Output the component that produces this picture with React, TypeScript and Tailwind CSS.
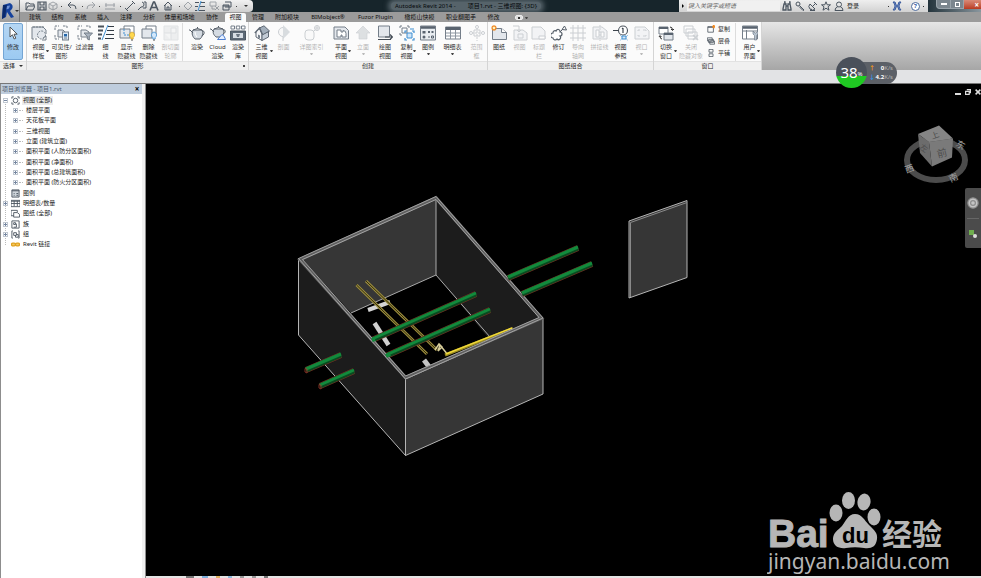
import React from "react";

type IconName = keyof typeof art;

const S = "#747e89";
const F = "#e3e7ec";
const B = "#3f8fd2";

const page = (
  <path d="M1 2h9l4 4v8H1z" fill={F} stroke={S} strokeWidth="1" />
);

const dashedCorners = (
  <path d="M1 5V1h4M9 1h4v3M1 10v4h4" fill="none" stroke={S} strokeWidth="1" strokeDasharray="2.5 1" />
);

const art = {
  arrow: <path d="M5 2v10l2.400-2.200L9.200 14l1.600-.8L9 9.200h3.200z" fill="#fff" stroke="#444" strokeWidth=".9" />,
  template: (
    <>
      <path d="M1 14V2h11l3 3v4" fill={F} stroke={S} />
      <path d="M1 14h6M2 2h11" stroke={S} strokeDasharray="2 1" />
      <circle cx="10.500" cy="10" r="4" fill={F} stroke={S} strokeDasharray="2 1" />
      <path d="M12 13l3-2v4h-4" fill="none" stroke={S} />
    </>
  ),
  visibility: (
    <>
      {dashedCorners}
      <path d="M4 5h5l3 3v4H4z" fill={F} stroke={S} />
      <rect x="8.500" y="7" width="6" height="8" fill="#dbe9f6" stroke={S} />
      <path d="M10 9h3v2.500h-3z" fill="#2566a8" />
      <path d="M10 13h3" stroke={S} />
    </>
  ),
  filter: (
    <>
      {dashedCorners}
      <path d="M4 5h5l3 2v5H4z" fill={F} stroke={S} />
      <path d="M7 8h8.500l-3.200 3.500V15l-2-1v-2.500z" fill="#a9b3bf" stroke={S} />
    </>
  ),
  thin: (
    <>
      <path d="M0 1.500h6M0 5.500h5M0 9.500h4M0 13.500h3" stroke="#4a525b" strokeWidth="1.800" />
      <path d="M10 1.500h6M9 5.500h7M8 9.500h8M7 13.500h9" stroke="#333b44" strokeWidth="1" />
      <path d="M10 0L4 15" stroke={B} strokeWidth="1" />
    </>
  ),
  showHidden: (
    <>
      <path d="M5 1h10v9H5z" fill="#fff" stroke={S} />
      <path d="M1 4h10v9H1z" fill={F} stroke={S} />
      <path d="M5 4v6h6" fill="none" stroke={B} strokeDasharray="2 1" />
      <path d="M13 7a3 3 0 0 1 1.200 5.500V14h-2.400v-1.500A3 3 0 0 1 13 7z" fill="#ffd84d" stroke="#c89a28" strokeWidth=".7" />
      <path d="M12 15h2" stroke="#555" />
    </>
  ),
  removeHidden: (
    <>
      <path d="M5 1h10v9H5z" fill="#fff" stroke={S} />
      <path d="M1 4h10v9H1z" fill={F} stroke={S} />
      <path d="M13 7a3 3 0 0 1 1.200 5.500V14h-2.400v-1.500A3 3 0 0 1 13 7z" fill="#d3e7fa" stroke={B} strokeWidth=".8" />
      <path d="M12 15h2" stroke="#555" />
    </>
  ),
  cut: (
    <>
      <path d="M1 1h14v14H1z" fill="#d4d7da" stroke="#b4b9be" />
      <path d="M1 8h7v7M8 3h5v5H8z" fill="#e8eaec" stroke="#a9afb5" />
    </>
  ),
  teapot: (
    <>
      <path d="M4 5c-2 4 0 7 2 9h5c2-2 4-5 2-9z" fill="#d5dbe2" stroke="#565f69" />
      <path d="M4 8L1 5H0M13 6c3-1 3 4-.5 5M4 5q4.500-3 9 0M8.500 3.500V2" fill="none" stroke="#565f69" />
      <path d="M6 7q0 3 2 5" stroke="#fff" fill="none" />
    </>
  ),
  cloudpot: (
    <>
      <path d="M4 4c-2 4 0 6 2 8h5c2-2 4-4 2-8z" fill="#d5dbe2" stroke="#565f69" />
      <path d="M4 7L1 4H0M13 5c3-1 3 3 0 4M4 4q4.500-3 9 0M8.500 2.500V1" fill="none" stroke="#565f69" />
      <path d="M7.500 14.500L12 9.500q2.500 1 3.500 5z" fill="#e4efff" stroke="#4f7fd0" />
    </>
  ),
  gallery: (
    <>
      <path d="M1 1h3.500v3H1zM6.300 1h3.500v3H6.300zM11.500 1H15v3h-3.500z" fill="#fff" stroke={S} />
      <path d="M.5 6h15v9H.5z" fill="#5d6976" stroke="#4c5762" />
      <path d="M3 8h10v5H3z" fill="#d7dde4" />
      <path d="M6 9h4l-1 3H7z" fill="#6c7783" />
    </>
  ),
  house: (
    <>
      <path d="M2 7v5l6 3.500V9L5.500 3.500z" fill="#f6f7f9" stroke="#5f6974" />
      <path d="M8 9.500v6l6.500-3.500V6.500z" fill="#c3ccd6" stroke="#5f6974" />
      <path d="M5.500 3L10 .8 15.500 6 8.500 9.800z" fill="#a3afbb" stroke="#5f6974" />
      <path d="M.8 8L5.500 3 8.500 9.500" fill="none" stroke="#5f6974" strokeWidth="1.300" />
      <path d="M4 9.500l2 1v3l-2-1z" fill={S} />
    </>
  ),
  section: (
    <>
      <circle cx="7" cy="7" r="4.500" fill="#f3f4f5" stroke={S} />
      <path d="M7 0l7 7-7 7z" fill="#9aa3ad" />
      <path d="M7 12v4" stroke={S} />
    </>
  ),
  callout: (
    <>
      <rect x="1" y="5" width="9" height="10" rx="3" fill="#f6f7f8" stroke={S} />
      <circle cx="13" cy="3" r="2.500" fill="none" stroke={S} />
      <path d="M10 6l1.500-1.500M10.500 3h5M13 .5v5" stroke={S} />
    </>
  ),
  plan: (
    <>
      <path d="M1 2h11l3.500 3.500V14H1z" fill={F} stroke={S} />
      <path d="M4 5h4v2h2V5.500q3 0 3 3V12H9v-2H8v2H4z" fill="#fff" stroke={S} />
    </>
  ),
  elevation: <path d="M8 1l7 7h-3v6H4V8H1z" fill="#a8afb6" stroke={S} strokeWidth=".6" />,
  drafting: (
    <>
      <path d="M1.500 1h11v11h-11z" fill={F} stroke={S} />
      <path d="M1 14.500h13M8 12h7M13 9.500l2.500 2.500-2.500 2.500" fill="none" stroke="#444c55" strokeWidth="1.200" />
    </>
  ),
  duplicate: (
    <>
      <path d="M3 3h5v5H3z" fill="#fff" stroke={S} />
      <path d="M1 3V1h2M8 1h2v2M1 8v2h2" fill="none" stroke={S} />
      <path d="M8 8h5v5H8z" fill="#cfe5f8" stroke={B} />
      <path d="M6 8V6h2M13 6h2v2M6 13v2h2M15 13v2h-2M11 4h4" fill="none" stroke={B} strokeWidth="1.200" />
    </>
  ),
  legend: (
    <>
      <path d="M.5 1h15v14H.5z" fill="#e9edf1" stroke={S} />
      <path d="M1 2.500h14" stroke="#59636f" strokeWidth="2.500" />
      <path d="M2.500 6h3v2.500h-3zM8 6h2v2H8zM11.500 6h2v2h-2z" fill="#59636f" />
      <circle cx="4" cy="12" r="1.500" fill="#59636f" />
      <path d="M8 12h2M11.500 11h2v2h-2z" stroke="#59636f" fill="none" />
    </>
  ),
  schedule: (
    <>
      <path d="M.5 2h15v12H.5z" fill="#fff" stroke={S} />
      <path d="M1 3.500h14" stroke="#59636f" strokeWidth="3" />
      <path d="M1 8h14M1 11h14M5.500 5v9M10.500 5v9" stroke="#8c959f" />
    </>
  ),
  scope: (
    <>
      <path d="M5 5h6v6H5z" fill="none" stroke={S} />
      <path d="M8 0v16M0 8h16" stroke={S} strokeDasharray="2 1" />
      <circle cx="8" cy="2" r="1.500" fill="#fff" stroke={S} />
      <circle cx="2" cy="8" r="1.500" fill="#fff" stroke={S} />
      <circle cx="14" cy="8" r="1.500" fill="#fff" stroke={S} />
    </>
  ),
  sheet: (
    <>
      <path d="M1.500 3.500h9l5 4v7h-14z" fill={F} stroke={S} />
      <path d="M10.500 3.500v4h5" fill="#fff" stroke={S} />
      <path d="M3 0v6M0 3h6M1 1l4 4M5 1L1 5" stroke="#f08a24" strokeWidth="1.200" />
      <circle cx="3" cy="3" r="1.200" fill="#fff3c0" />
    </>
  ),
  placeView: (
    <>
      <path d="M2 5h9l4 3v7H2z" fill={F} stroke={S} />
      <path d="M1 1h6v5M5 5l2 2 2-2M6 9h5v4H6z" fill="none" stroke={S} />
    </>
  ),
  titleBlock: (
    <>
      {page}
      <path d="M8 11h6v3H8z" fill="#fff" stroke={S} />
    </>
  ),
  revision: (
    <>
      <path d="M2 8a2 2 0 0 1 3-2 2 2 0 0 1 4 1 2 2 0 0 1 0 4 2 2 0 0 1-3 3 2.200 2.200 0 0 1-4-1 2.500 2.500 0 0 1 0-5z" fill="#fff" stroke="#565f69" strokeWidth="1.200" />
      <path d="M9 7l3-3M11 4.500L13.500 1l2 4z" fill="#fff" stroke="#565f69" />
    </>
  ),
  grid: <path d="M3 0v16M8 0v16M13 0v16M0 3h16M0 8h16M0 13h16" stroke={S} />,
  matchline: (
    <>
      <path d="M1 2h9l5 4v8H1z" fill={F} stroke={S} />
      <path d="M4 5h3v7H4zM9 7h3v5H9z" fill="#fff" stroke={S} />
      <path d="M8 0v16" stroke={S} strokeDasharray="2 1" />
    </>
  ),
  reference: (
    <>
      <circle cx="10" cy="5.500" r="4.500" fill="#fff" stroke="#4c545d" strokeWidth="1.100" />
      <path d="M0 5.500h5.500M10 3v5M9 3.800l1-.8" fill="none" stroke="#3c444d" strokeWidth="1.200" />
      <path d="M9 11h4v3H9zM7.500 10.500l1 .8M14.500 10.500l-1 .8M7.500 15l1-.8M14.500 15l-1-.8" fill="#d4e8f9" stroke={B} />
    </>
  ),
  viewport: (
    <>
      <path d="M1 2h10l4 4v8H1z" fill={F} stroke={S} />
      <path d="M4 6V5h2M9 5h3v1M4 10v1h2M9 11h3v-1" fill="none" stroke={S} />
    </>
  ),
  switchWin: (
    <>
      <path d="M1 2h9v7H1z" fill="#fff" stroke={S} />
      <path d="M1 3h9" stroke="#59636f" strokeWidth="2" />
      <path d="M6 8h9v7H6z" fill={F} stroke={S} />
      <path d="M6 9h9" stroke="#59636f" strokeWidth="2" />
      <path d="M12 2q2.500 0 2.500 3M13 4l1.500 1.500L16 4M4 14q-2 0-2-3M1 12l1-1.500L3.500 12" fill="none" stroke="#333" />
    </>
  ),
  closeHidden: (
    <>
      <path d="M1 1h9v7H1zM3 4h9v7H3zM5 7h9v7H5z" fill="#fff" stroke={S} />
      <path d="M10 10l5 5M15 10l-5 5" stroke={S} strokeWidth="1.600" />
    </>
  ),
  userUi: (
    <>
      <path d="M.5 1h15v13H.5z" fill="#fff" stroke={S} />
      <path d="M1 2.500h14" stroke="#59636f" strokeWidth="2.500" />
      <path d="M1 6h14M4.500 5v9" stroke={S} />
      <path d="M11 6v3l1.500 1.500V15h2v-4.500L16 9V6l-2 2h-1z" fill="#b8c4d0" stroke={S} strokeWidth=".7" />
    </>
  ),
};

const Icon = ({ name, className = "size-4" }: { name: IconName; className?: string }) => (
  <svg viewBox="0 0 16 16" className={`${className} shrink-0`} aria-hidden="true">
    {art[name]}
  </svg>
);

type Tool = {
  icon: IconName;
  lines: string[];
  w: string;
  off?: boolean;
  drop?: boolean;
};

const graphicsTools: Tool[] = [
  { icon: "template", lines: ["视图", "样板"], w: "w-[23px]", drop: true },
  { icon: "visibility", lines: ["可见性/", "图形"], w: "w-[23px]" },
  { icon: "filter", lines: ["过滤器"], w: "w-[23px]" },
  { icon: "thin", lines: ["细", "线"], w: "w-[19px]" },
  { icon: "showHidden", lines: ["显示", "隐藏线"], w: "w-[23px]" },
  { icon: "removeHidden", lines: ["删除", "隐藏线"], w: "w-[21px]" },
  { icon: "cut", lines: ["剖切面", "轮廓"], w: "w-[23px]", off: true },
];
const renderTools: Tool[] = [
  { icon: "teapot", lines: ["渲染"], w: "w-5" },
  { icon: "cloudpot", lines: ["Cloud", "渲染"], w: "w-[21px]" },
  { icon: "gallery", lines: ["渲染", "库"], w: "w-5" },
];
const createTools: Tool[] = [
  { icon: "house", lines: ["三维", "视图"], w: "w-[25px]", drop: true },
  { icon: "section", lines: ["剖面"], w: "w-[19px]", off: true },
  { icon: "callout", lines: ["详图索引"], w: "w-[37px]", off: true, drop: true },
  { icon: "plan", lines: ["平面", "视图"], w: "w-[22px]", drop: true },
  { icon: "elevation", lines: ["立面"], w: "w-[22px]", off: true, drop: true },
  { icon: "drafting", lines: ["绘图", "视图"], w: "w-[22px]" },
  { icon: "duplicate", lines: ["复制", "视图"], w: "w-[21px]", drop: true },
  { icon: "legend", lines: ["图例"], w: "w-[22px]", drop: true },
  { icon: "schedule", lines: ["明细表"], w: "w-[27px]", drop: true },
  { icon: "scope", lines: ["范围", "框"], w: "w-[21px]", off: true },
];
const sheetTools: Tool[] = [
  { icon: "sheet", lines: ["图纸"], w: "w-[22px]" },
  { icon: "placeView", lines: ["视图"], w: "w-[19px]", off: true },
  { icon: "titleBlock", lines: ["标题", "栏"], w: "w-5", off: true },
  { icon: "revision", lines: ["修订"], w: "w-[19px]" },
  { icon: "grid", lines: ["导向", "轴网"], w: "w-5", off: true },
  { icon: "matchline", lines: ["拼接线"], w: "w-[23px]", off: true },
  { icon: "reference", lines: ["视图", "参照"], w: "w-[19px]" },
  { icon: "viewport", lines: ["视口"], w: "w-[23px]", off: true, drop: true },
];
const windowTools: Tool[] = [
  { icon: "switchWin", lines: ["切换", "窗口"], w: "w-6", drop: true },
  { icon: "closeHidden", lines: ["关闭", "隐藏对象"], w: "w-[26px]", off: true },
];

const Caret = ({ className = "" }: { className?: string }) => (
  <span className={`h-0 w-0 border-x-2 border-t-2 border-x-transparent border-t-[#333] ${className}`} />
);

const MiniCaret = ({ className = "" }: { className?: string }) => (
  <span className={`h-0 w-[3px] border-x border-t-2 border-x-transparent border-t-[#444] ${className}`} />
);

const ToolButton = ({ tool }: { tool: Tool }) => (
  <button
    disabled={tool.off}
    className={`relative flex h-full shrink-0 flex-col items-center pt-[3px] whitespace-nowrap ${tool.w} ${tool.off ? "opacity-35" : ""}`}
  >
    <Icon name={tool.icon} />
    <span className="mt-0.5 flex flex-col items-center leading-[9px]">
      {tool.lines.map((l) => (
        <span key={l}>{l}</span>
      ))}
    </span>
    {tool.drop && (tool.lines.length > 1 ? <MiniCaret className="absolute right-px bottom-[9px]" /> : <MiniCaret className="mt-px" />)}
  </button>
);

const Tools = ({ list }: { list: Tool[] }) => (
  <>
    {list.map((t, i) => (
      <ToolButton key={i} tool={t} />
    ))}
  </>
);

const Panel = ({ title, caret, launcher, children }: { title: string; caret?: boolean; launcher?: boolean; children: React.ReactNode }) => (
  <section className="flex shrink-0 flex-col border-r border-[#d4d4d4] bg-[#fbfbfb]">
    <div className="flex h-[39px]">{children}</div>
    <h2 className="relative flex h-[9px] items-center justify-center gap-1 border-t border-[#e2e2e2] bg-[#f0f0f0] leading-[8px]">
      {title}
      {caret && <Caret />}
      {launcher && <span className="absolute right-[3px] bottom-[3px] size-0.5 bg-[#444]" />}
    </h2>
  </section>
);

const tabs: [string, string][] = [
  ["建筑", "w-[22px]"],
  ["结构", "w-[23px]"],
  ["系统", "w-[23px]"],
  ["插入", "w-[22px]"],
  ["注释", "w-6"],
  ["分析", "w-[22px]"],
  ["体量和场地", "w-[39px]"],
  ["协作", "w-[26px]"],
  ["视图", "w-[21px]"],
  ["管理", "w-6"],
  ["附加模块", "w-[34px]"],
  ["BIMobject®", "w-12"],
  ["Fuzor Plugin", "w-[47px]"],
  ["橄榄山快模", "w-[41px]"],
  ["职业翻图手", "w-[42px]"],
  ["修改", "w-[23px]"],
];

const quick: { label: string; w: string; off?: boolean; d: React.ReactNode }[] = [
  { label: "打开", w: "w-3", d: <path d="M1 9V2h3l1 1h4v2M1 9l2-4h7L8 9z" /> },
  { label: "保存", w: "w-3", d: <path d="M1 1h8v8H1zM3 1v3h4V1M3 9V6h4v3" strokeWidth="1.200" /> },
  { label: "同步", w: "w-[10px]", off: true, d: <path d="M5 1l4 2v4L5 9 1 7V3zM1 3l4 2 4-2M5 5v4" /> },
  { label: "撤消", w: "w-[14px]", d: <path d="M4 1L1 4l3 3M1 4h5q3 0 3 4" /> },
  { label: "重做", w: "w-[10px]", off: true, d: <path d="M6 1l3 3-3 3M9 4H4Q1 4 1 8" /> },
  { label: "测量", w: "w-[14px]", off: true, d: <path d="M0 8h10M0 4h10M1 2v4M9 2v4" /> },
  { label: "对齐尺寸标注", w: "w-3", d: <path d="M1 9l8-8M0 7l3 3M7 0l3 3" /> },
  { label: "按类别标记", w: "w-3", d: <path d="M1 9l3-3M5 1a2.500 2.500 0 1 1-1 5M7 1h2v6H6" /> },
  { label: "文字", w: "w-3", d: <path d="M1 9.500L4.500 1h1L9 9.500M2.500 6.500h5" strokeWidth="1.600" /> },
  { label: "默认三维视图", w: "w-4", d: <path d="M1 5l4-4 4 4M2 4v5h6V4M4 9V6h2v3" /> },
  { label: "剖面", w: "w-[10px]", off: true, d: <path d="M5 1l4 4-4 4-4-4z" /> },
  { label: "细线", w: "w-[14px]", d: <><path d="M0 1.500h4M0 5.500h3M0 9.500h2M6 1.500h4M5 5.500h5M4 9.500h6" /><path d="M6 0L3 10" stroke="#3f8fd2" /></> },
  { label: "关闭隐藏窗口", w: "w-[14px]", off: true, d: <path d="M1 1h6v4H1zM3 5v3h3M6 5l4 4M10 5L6 9" /> },
  { label: "切换窗口", w: "w-3", d: <path d="M3 1h6v5H3M1 4h6v5H1zM1 5h6" /> },
];
const withDot = new Set(["同步", "撤消", "重做", "测量", "默认三维视图", "切换窗口"]);

const Line = ({ children, size = "size-[10px]", color = "#4b5560" }: { children: React.ReactNode; size?: string; color?: string }) => (
  <svg viewBox="0 0 10 10" className={`${size} shrink-0`} fill="none" stroke={color} strokeWidth="1" aria-hidden="true">
    {children}
  </svg>
);

const TitleBar = () => (
  <div className="flex h-3 items-center bg-[#17252b]">
    <div className="flex h-full w-[233px] shrink-0 items-center rounded-r-sm bg-linear-to-b from-[#f2f2f2] to-[#cfcfcf] pl-1">
      {quick.map((q) => (
        <React.Fragment key={q.label}>
          <button aria-label={q.label} disabled={q.off} className={`flex shrink-0 justify-center ${q.w} ${q.off ? "opacity-45" : ""}`}>
            <Line>{q.d}</Line>
          </button>
          {withDot.has(q.label) && <span className="mx-[3px] size-px shrink-0 bg-[#444]" />}
        </React.Fragment>
      ))}
      <Caret className="ml-1 shrink-0" />
    </div>
    <div className="flex h-full flex-1 items-center justify-center overflow-hidden whitespace-nowrap text-[#05090b]">
      <h1 className="flex gap-3 rounded-full bg-[#56636a] px-1 leading-[8px] shadow-[0_0_5px_3px_#56636a]">
        <span>Autodesk Revit 2014 -</span>
        <span>项目1.rvt - 三维视图: {"{3D}"}</span>
      </h1>
    </div>
    <div className="flex h-full shrink-0 items-center bg-linear-to-b from-[#efefef] to-[#d2d2d2]">
      <span className="ml-[3px] h-0 w-0 border-y-2 border-l-2 border-y-transparent border-l-black" />
      <input
        aria-label="搜索"
        placeholder="键入关键字或短语"
        className="ml-[3px] h-[10px] w-[93px] bg-[#f0f0f0] px-px italic placeholder:text-[#666]"
      />
      <div className="flex h-full w-[148px] items-center gap-[3px] pl-0.5">
        <Line><path d="M1 8l1-5h2v6H1zM9 8L8 3H6v6h3zM4 5h2M2 1h1v2M7 1h1v2" strokeWidth="1.300" /></Line>
        <Line><circle cx="3" cy="3" r="2" /><path d="M4.500 4.500L9 9l-1 .5-4-4" /></Line>
        <Line><path d="M2 3a3.500 3.500 0 0 0 5 5zM5 5l3-3M6 1l3 3M4 8l-2 1.500h5" /></Line>
        <Line><path d="M5 .8l1.200 3H9.500L7 5.800 8 9.200 5 7.200 2 9.200l1-3.400L.5 3.800h3.300z" /></Line>
        <Line><circle cx="5" cy="3.500" r="2.500" /><path d="M1 9.500q0-3 2.500-3.500M9 9.500q0-3-2.500-3.500M1 9.500h8" /></Line>
        <button className="whitespace-nowrap">登录</button>
        <span className="ml-[26px] size-px bg-[#333]" />
        <span className="flex">
          <Line color="#3a5a9c"><path d="M1 1q4 4 0 8h2q3-4 0-8zM9 1q-4 4 0 8H7q-3-4 0-8z" fill="#7f9cd0" /></Line>
        </span>
        <button aria-label="帮助" className="ml-1.5 flex size-[9px] items-center justify-center rounded-full border border-[#4c6a9c] bg-white font-bold text-[#2a4f9c]">
          ?
        </button>
        <span className="size-px bg-[#333]" />
      </div>
    </div>
    <div className="flex h-full w-[53px] shrink-0 items-start bg-linear-to-r from-[#24343c] to-[#8a979f] pl-2">
      <button aria-label="最小化" className="flex h-[9px] w-[15px] items-center justify-center rounded-bl-sm border border-t-0 border-[#9aa4ab] bg-[#7b868e]">
        <span className="h-0.5 w-1.5 bg-white" />
      </button>
      <button aria-label="还原" className="flex h-[9px] w-[13px] items-center justify-center border border-t-0 border-l-0 border-[#9aa4ab] bg-[#7b868e]">
        <span className="size-[5px] border border-white" />
      </button>
      <button aria-label="关闭" className="flex h-[9px] flex-1 items-center justify-end bg-linear-to-b from-[#d98a78] to-[#b93a20] pr-0.5 text-[8px] leading-[8px] font-bold text-white">
        ×
      </button>
    </div>
  </div>
);

const TabBar = () => (
  <nav className="flex h-[10px] items-end bg-[#9b9b9b] pl-1 leading-[9px]">
    {tabs.map(([t, w]) => (
      <button
        key={t}
        className={`h-[9px] shrink-0 whitespace-nowrap text-center text-[#111] ${w} ${t === "视图" ? "rounded-t-xs bg-[#fbfbfb]" : ""}`}
      >
        {t}
      </button>
    ))}
    <button aria-label="最小化功能区" className="flex h-[9px] w-8 items-center justify-center gap-0.5">
      <span className="flex h-[5px] w-2 items-center justify-center rounded-xs border border-[#eee] bg-[#ddd]">
        <span className="size-0.5 bg-[#333]" />
      </span>
      <MiniCaret />
    </button>
  </nav>
);

const Ribbon = () => (
  <div className="flex h-12 bg-linear-to-b from-[#e6e6e6] to-[#a6a6a6]">
    <Panel title="选择" caret>
      <button className="mx-[3px] mt-px flex h-[37px] w-5 flex-col items-center rounded-xs border border-[#74a5d4] bg-linear-to-b from-[#b5d6f3] to-[#9ccaf2] pt-px leading-[9px]">
        <Icon name="arrow" />
        <span className="mt-0.5">修改</span>
      </button>
    </Panel>
    <Panel title="图形" launcher>
      <Tools list={graphicsTools} />
      <span className="mt-px mr-1 w-px bg-[#dcdcdc]" />
      <Tools list={renderTools} />
    </Panel>
    <Panel title="创建">
      <Tools list={createTools} />
    </Panel>
    <Panel title="图纸组合">
      <Tools list={sheetTools} />
    </Panel>
    <Panel title="窗口">
      <Tools list={windowTools} />
      <div className="flex w-[31px] flex-col gap-1 pt-[3px] pl-[3px] leading-[8px]">
        <button className="flex items-center gap-[3px] whitespace-nowrap">
          <Line size="size-2"><path d="M1 2h7v7H1zM1 3h7" /><path d="M8.500 0v4M6.500 2h4" stroke="#f08a24" strokeWidth="2" /></Line>
          复制
        </button>
        <button className="flex items-center gap-[3px] whitespace-nowrap">
          <Line size="size-2"><path d="M.5 1h6v4h-6zM2 3h6v4H2zM3.500 5h6v4h-6z" fill="#fff" /></Line>
          层叠
        </button>
        <button className="flex items-center gap-[3px] whitespace-nowrap">
          <Line size="size-2"><path d="M2.500.5h5v3.500h-5zM2.500 6h5v3.500h-5z" /></Line>
          平铺
        </button>
      </div>
      <span className="mt-px mr-[2px] w-px bg-[#dcdcdc]" />
      <Tools list={[{ icon: "userUi", lines: ["用户", "界面"], w: "w-[23px]", drop: true }]} />
    </Panel>
  </div>
);

type Node = { text: string; depth: number; box?: "+" | "-"; icon?: React.ReactNode; active?: boolean };
const tree: Node[] = [
  { text: "视图 (全部)", depth: 0, box: "-", active: true, icon: <><circle cx="5" cy="5" r="2.500" /><path d="M1 3V1h2M7 1h2v2M1 7v2h2M9 7v2H7" /></> },
  { text: "楼层平面", depth: 1, box: "+" },
  { text: "天花板平面", depth: 1, box: "+" },
  { text: "三维视图", depth: 1, box: "+" },
  { text: "立面 (建筑立面)", depth: 1, box: "+" },
  { text: "面积平面 (人防分区面积)", depth: 1, box: "+" },
  { text: "面积平面 (净面积)", depth: 1, box: "+" },
  { text: "面积平面 (总建筑面积)", depth: 1, box: "+" },
  { text: "面积平面 (防火分区面积)", depth: 1, box: "+" },
  { text: "图例", depth: 0, icon: <path d="M1 1h8v8H1zM1 2h8M3 5h1M6 5h2M3 7h1M6 7h2" fill="#cfd5db" /> },
  { text: "明细表/数量", depth: 0, box: "+", icon: <path d="M0 1.500h10v7H0zM0 2.500h10M0 5h10M3.500 2v6M7 2v6" /> },
  { text: "图纸 (全部)", depth: 0, icon: <path d="M0 1.500h7v2M0 1.500v6h3M3 4h4l2.500 2v3H3z" /> },
  { text: "族", depth: 0, box: "+", icon: <path d="M1 1h8v8H1zM3 3h2v2H3zM6 4v4H3" /> },
  { text: "组", depth: 0, box: "+", icon: <path d="M2 1H1v8h1M8 1h1v8H8M3 3h3v3H3zM6 5h2v3H5V6" /> },
  { text: "Revit 链接", depth: 0, icon: <g stroke="#e0a01c" strokeWidth="1.400" fill="#f3c860"><rect x="0.500" y="3.500" width="4.500" height="3" rx="1.500" /><rect x="5" y="3.500" width="4.500" height="3" rx="1.500" /></g> },
];

const Browser = () => (
  <aside className="flex w-[146px] shrink-0 flex-col border-x border-[#8d8d8d] bg-[#f0f0f0] pr-[3px]">
    <div className="flex h-[10px] shrink-0 items-center justify-between bg-[#bfcddd] px-px leading-[10px] text-[#4c5a6b]">
      <h2>项目浏览器 - 项目1.rvt</h2>
      <button aria-label="关闭项目浏览器" className="w-2 text-[8px] leading-[8px] font-bold text-black">×</button>
    </div>
    <div className="flex-1 bg-white">
      <ul className="relative mt-px grid h-[155px] auto-rows-fr text-[#222]">
        <li aria-hidden="true" className="absolute top-[5px] left-1 h-[145px] border-l border-dotted border-[#bbb]" />
        {tree.map((n) => (
          <li key={n.text} className={`relative flex items-center whitespace-nowrap ${n.depth ? "pl-3" : "pl-0.5"}`}>
            {n.box ? (
              <button aria-label={n.text} className="flex size-[5px] shrink-0 items-center justify-center border border-[#c0c7d0] bg-white">
                <span className="absolute h-px w-[3px] bg-[#7586a0]" />
                {n.box === "+" && <span className="absolute h-[3px] w-px bg-[#7586a0]" />}
              </button>
            ) : (
              <span className="w-[5px]" />
            )}
            {n.depth ? <span className="mr-[3px] ml-px w-1 border-t border-dotted border-[#bbb]" /> : <span className="ml-[3px] flex"><Line size="size-[9px]">{n.icon}</Line></span>}
            <span className={n.depth ? "" : `ml-0.5 px-px leading-[9px] ${n.active ? "bg-[#ececec]" : ""}`}>{n.text}</span>
          </li>
        ))}
      </ul>
    </div>
  </aside>
);

const Pipe = ({ a, b }: { a: [number, number]; b: [number, number] }) => (
  <g>
    <path d={`M${a[0]} ${a[1]}L${b[0]} ${b[1]}`} stroke="#7c2f22" strokeWidth="6" />
    <path d={`M${a[0]} ${a[1]}L${b[0]} ${b[1]}`} stroke="#0a4a20" strokeWidth="5" />
    <path d={`M${a[0]} ${a[1] - 1}L${b[0]} ${b[1] - 1}`} stroke="#128a3c" strokeWidth="3" />
  </g>
);

const Model = () => (
  <svg viewBox="146 84 835 492" className="size-full" fill="none" role="img" aria-label="三维模型">
    <path d="M302 259L436 198V275L351 313z" fill="#363636" />
    <path d="M436 198L541 318 490 340 436 275z" fill="#1c1c1c" />
    <path d="M436 198V275M351 313L436 275 490 337" stroke="#aaa" />
    <path d="M368 310L390 302" stroke="#d4d4d4" strokeWidth="4" />
    <path d="M374.500 323L388.500 345" stroke="#d0d0d0" strokeWidth="4.500" />
    <path d="M424 360L430 368" stroke="#c4c4c4" strokeWidth="5" />
    <g stroke="#9c8d3c" strokeWidth="3">
      <path d="M356.500 285L427 354M366 281L437 350" />
    </g>
    <g stroke="#2d280c">
      <path d="M356.500 285L427 354M366 281L437 350" />
    </g>
    <Pipe a={[372, 340]} b={[476, 294]} />
    <Pipe a={[386, 356]} b={[490, 310]} />
    <path d="M435 350l4-6 3 3-4 4 2-6 8 10" stroke="#d9cf9a" strokeWidth="1.500" />
    <path d="M445 355L513 328.500" stroke="#9b8c22" strokeWidth="3" />
    <path d="M446 354L512 328" stroke="#f0d838" strokeWidth="1.500" />
    <path d="M298.500 258.500L405.500 379V455.500L298.500 335z" fill="#1c1c1c" stroke="#b5b5b5" />
    <path d="M405.500 379L543 318V394L405.500 455.500z" fill="#363636" stroke="#b5b5b5" />
    <path d="M300 259.500L436 198 541.500 318 405.500 377.500z" stroke="#5e5e5e" strokeWidth="3.500" />
    <path d="M298.500 258.500L436 196.500 543 318 405.500 379zM302.500 259.500L436 199.500 539 317.500 405.500 376z" stroke="#b5b5b5" strokeWidth=".8" />
    <path d="M372 340L375 339M386 356L390 354" stroke="#128a3c" strokeWidth="4" />
    <Pipe a={[508, 278]} b={[578, 248]} />
    <Pipe a={[522, 294]} b={[592, 264]} />
    <Pipe a={[306, 370]} b={[341, 355]} />
    <Pipe a={[320, 386]} b={[354, 371]} />
    <path d="M305 368.500v3.500l2 1v-4zM319 384.500v3.500l2 1v-4z" stroke="#9c3a2c" strokeWidth=".8" />
    <path d="M629 221L687 200.500V277.500L629 298z" fill="#363636" stroke="#b5b5b5" />
    <path d="M630.500 297V222.500L687 202.500" stroke="#8a8a8a" />
  </svg>
);

const ViewCube = () => (
  <svg viewBox="0 0 72 70" className="absolute top-[39px] right-[6px] h-[70px] w-[72px]" role="img" aria-label="ViewCube">
    <ellipse cx="33" cy="37" rx="29" ry="20" fill="none" stroke="#4c4c4c" strokeWidth="6" />
    <g fill="#a5a5a5" fontSize="9" fontFamily="Noto Sans CJK SC">
      <text x="2" y="49" transform="rotate(-20 6 46)">西</text>
      <text x="46" y="58" transform="rotate(-25 50 55)">南</text>
      <text x="53" y="25" transform="rotate(30 57 22)">东</text>
    </g>
    <path d="M15 11L36 2.500 50 15.500 26 19z" fill="#858585" />
    <path d="M15 11L26 19 29 43.500 17 30z" fill="#6c6c6c" />
    <path d="M26 19L50 15.500 49 34.500 29 43.500z" fill="#7a7a7a" />
    <g fill="#4e4e4e" fontFamily="Noto Sans CJK SC">
      <text x="34" y="34" fontSize="10" transform="rotate(-14 38 30)">前</text>
      <text x="28" y="15" fontSize="8" transform="rotate(-20 32 12)">上</text>
      <text x="17" y="28" fontSize="8" transform="rotate(35 21 25)">左</text>
    </g>
  </svg>
);

const NavBar = () => (
  <div className="absolute top-[104px] right-0 flex h-[60px] w-4 flex-col items-center justify-around rounded-l-xs bg-[#4b4b4b]">
    <button aria-label="导航控制盘" className="mt-1">
      <Line size="size-3" color="#8c8c8c"><circle cx="5" cy="5" r="4.300" fill="#c4c4c4" /><circle cx="5" cy="5" r="2" /></Line>
    </button>
    <span className="h-px w-3 bg-[#666]" />
    <button aria-label="缩放" className="mb-1">
      <Line size="size-[10px]" color="none"><path d="M1 1h5v5H1z" fill="#6fae4e" /><circle cx="7" cy="7" r="2" fill="#ddd" /></Line>
    </button>
  </div>
);

const Watermark = () => (
  <svg viewBox="0 0 190 86" className="absolute right-6 bottom-0 h-[86px] w-[190px]" fill="#b6b6b6" role="img" aria-label="Baidu 经验 jingyan.baidu.com">
    <text x="1" y="57" fontSize="39" fontWeight="bold" fontFamily="Liberation Sans" stroke="#b6b6b6" strokeWidth="1">Bai</text>
    <ellipse cx="69" cy="23" rx="6.500" ry="8.500" />
    <ellipse cx="81.500" cy="10.500" rx="6.500" ry="8.500" />
    <ellipse cx="97" cy="12" rx="6.500" ry="8.500" transform="rotate(10 97 12)" />
    <ellipse cx="107" cy="27" rx="6.500" ry="8.500" />
    <path d="M88 24c7 0 9 6 14 11 5 5 9 8 8 14-1 8-6 10-13 9-6-1-12-1-18 0-7 1-13-2-13-9 0-6 5-9 9-13 4-5 6-12 13-12z" />
    <text x="75" y="53" fontSize="22" fontWeight="bold" fontFamily="Liberation Sans" fill="#000">du</text>
    <text x="115" y="55" fontSize="30" fontWeight="bold" fontFamily="Noto Sans CJK SC">经验</text>
    <text x="1" y="79" fontSize="21" fontFamily="Noto Sans">jingyan.baidu.com</text>
  </svg>
);

const Rate = ({ mark, color, value }: { mark: string; color: string; value: string }) => (
  <div className="flex h-[9px] items-center leading-[9px]">
    <span className={`font-bold ${color}`}>{mark}</span>
    <b className="ml-auto">{value}</b>
    <span className="text-[#b5b5b5]">K/s</span>
  </div>
);

const NetMeter = () => (
  <div className="absolute top-[57px] right-[84px] h-8 w-[61px] text-white">
    <div className="absolute top-[5px] right-0 flex h-[22px] w-[46px] flex-col justify-center rounded-r-full bg-[#5c6067] pr-1 pl-[18px]">
      <Rate mark="↑" color="text-[#f29a1f]" value="0" />
      <Rate mark="↓" color="text-[#2f9bee]" value="4.2" />
    </div>
    <div className="absolute top-0 left-0 flex size-[31px] items-center justify-center rounded-full bg-linear-to-b from-[#4a505a] from-60% to-[#1fc922] to-60%">
      <span className="text-[15px] leading-none">38</span>
      <span className="mt-1">%</span>
    </div>
  </div>
);

export default function App() {
  return (
    <div className="relative flex h-screen flex-col overflow-hidden bg-[#e2e3e5] font-['Noto_Sans','Noto_Sans_CJK_SC',sans-serif] text-[6px] text-[#2b2b2b]">
      <header className="shrink-0">
        <div className="flex">
          <button
            aria-label="应用程序菜单"
            className="flex h-[22px] w-5 shrink-0 items-center border-r border-[#777] bg-linear-to-b from-[#d5d5d5] to-[#9c9c9c]"
          >
            <svg viewBox="0 0 15 18" className="h-[18px] w-[15px] shrink-0" aria-hidden="true">
              <path d="M3 3l7-2q4 2 2 6l-2 2 4 6-3 1-4-6-1 5-4 2z" fill="#16429c" />
              <path d="M3 3l4 0-2 12-3 2z" fill="#0b2a6b" />
              <path d="M7 4l3-.5-1 3-2.500 1z" fill="#6f92d6" />
            </svg>
            <Caret />
          </button>
          <div className="min-w-0 flex-1">
            <TitleBar />
            <TabBar />
          </div>
        </div>
        <Ribbon />
        <div className="h-[14px] border-b border-[#777]" />
      </header>
      <div className="flex min-h-0 flex-1">
        <Browser />
        <main className="flex min-w-0 flex-1 flex-col">
          <div className="relative min-h-0 flex-1 bg-black">
            <Model />
            <div className="absolute top-[5px] right-0 flex items-center gap-0.5 text-white">
              <button aria-label="最小化视图" className="mt-1 h-0.5 w-1.5 bg-[#ddd]" />
              <button aria-label="还原视图" className="ml-0.5"><Line size="size-1.5" color="#ddd"><path d="M3 1h6v5H7M1 4h6v5H1z" strokeWidth="2" /></Line></button>
              <button aria-label="关闭视图" className="ml-0.5"><Line size="size-1.5" color="#ddd"><path d="M1 1l8 8M9 1L1 9" strokeWidth="2.500" /></Line></button>
            </div>
            <ViewCube />
            <NavBar />
            <Watermark />
          </div>
          <footer className="flex h-0.5 gap-2 bg-[#e4e4e4] pl-10">
            <span className="w-2 bg-[#777]" />
            <span className="w-1.5 bg-[#7fb0dc]" />
            <span className="w-1 bg-[#e0b060]" />
            <span className="w-1 bg-[#8fb8dc]" />
            <span className="w-1 bg-[#999]" />
            <span className="w-1 bg-[#999]" />
            <span className="w-1 bg-[#777]" />
          </footer>
        </main>
      </div>
      <NetMeter />
    </div>
  );
}
